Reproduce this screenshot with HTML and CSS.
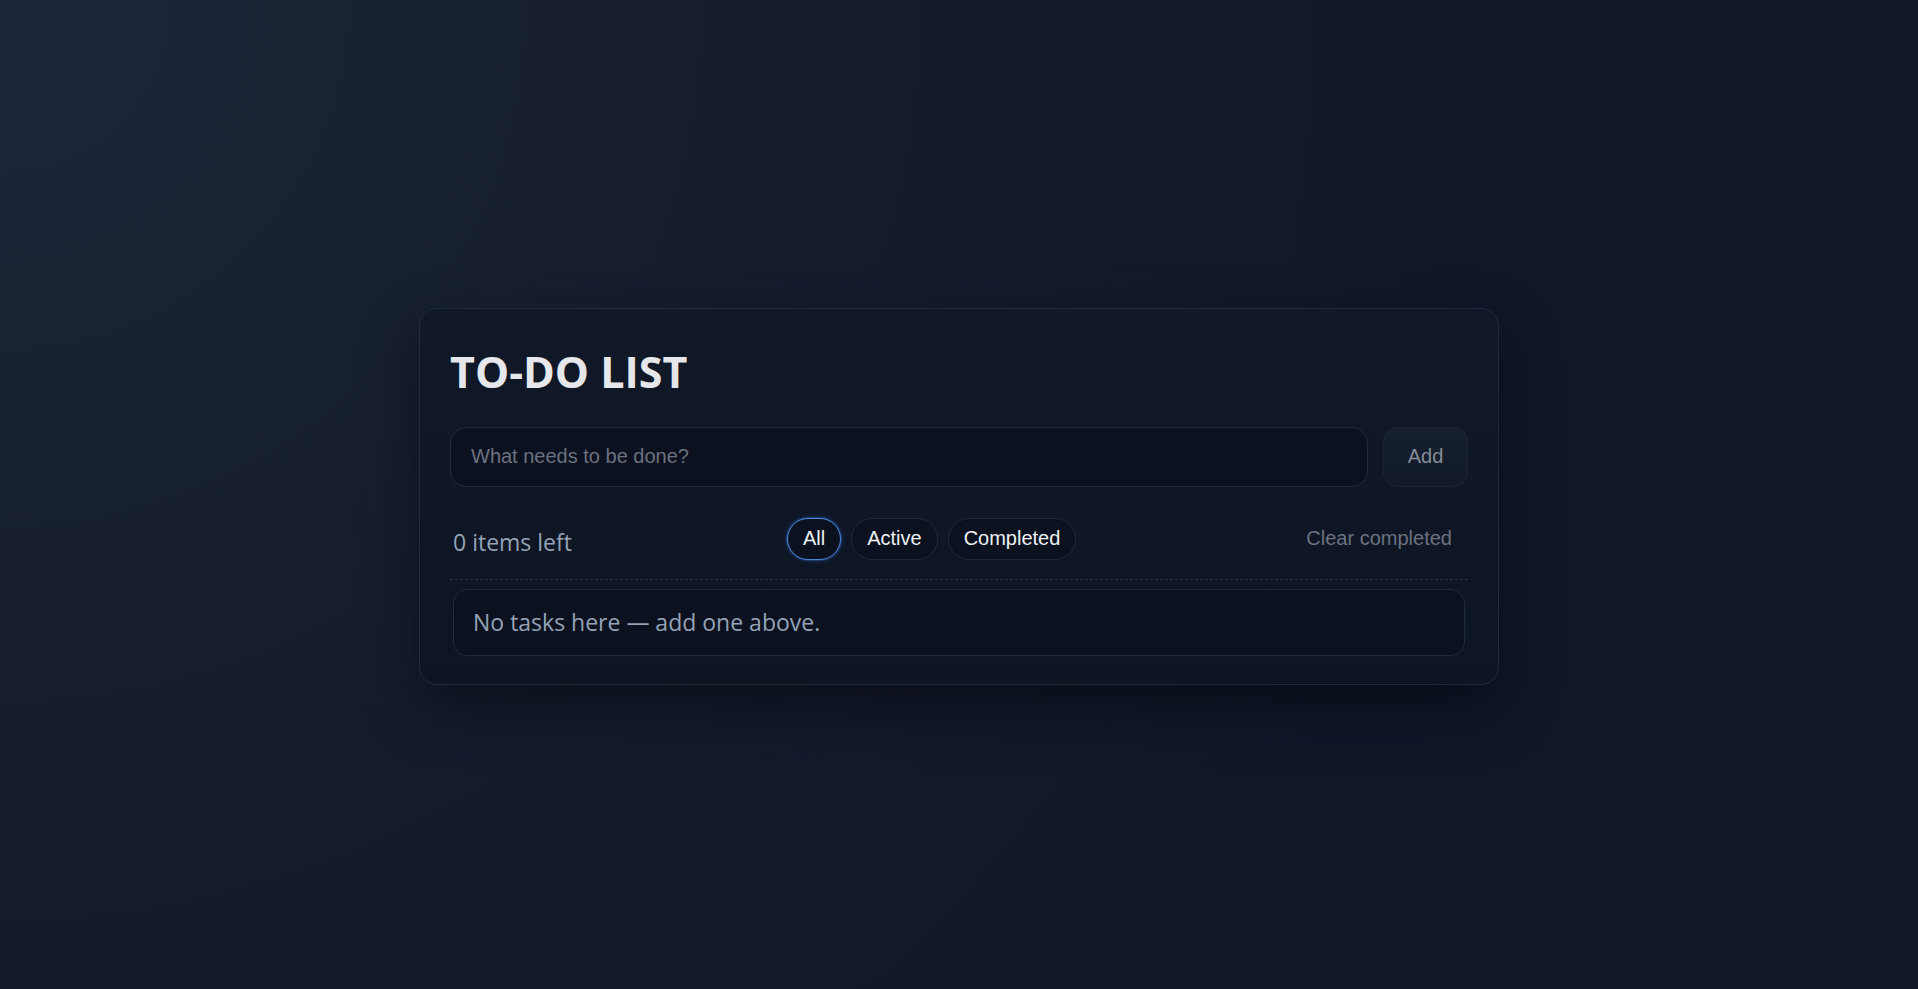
FILE: index.html
```html
<!DOCTYPE html>
<html lang="en">
<head>
<meta charset="utf-8">
<title>To-Do List</title>
<link rel="stylesheet" href="styles.css">
</head>
<body>
<main class="card">
  <h1 class="title">TO-DO LIST</h1>
  <form class="add-row">
    <input class="add-input" type="text" placeholder="What needs to be done?">
    <button class="add-btn" type="button">Add</button>
  </form>
  <div class="controls">
    <span class="count">0 items left</span>
    <div class="filters">
      <button class="pill pill-active" type="button">All</button>
      <button class="pill" type="button">Active</button>
      <button class="pill" type="button">Completed</button>
    </div>
    <button class="clear-btn" type="button">Clear completed</button>
  </div>
  <ul class="list">
    <li class="empty">No tasks here — add one above.</li>
  </ul>
</main>
</body>
</html>
```
FILE: styles.css
```css
* { box-sizing: border-box; }
html, body { height: 100%; }
body {
  margin: 0;
  padding-top: 3px;
  min-height: 100vh;
  display: flex;
  align-items: center;
  justify-content: center;
  background: radial-gradient(circle at 0% 0%, #1d2638 0%, #151d2e 35%, #0f1729 70%, #0f1729 100%);
  font-family: "Liberation Sans", Arial, sans-serif;
  color: #e5e7eb;
}
.card {
  width: 1080px;
  padding: 30px 30px 28px;
  border: 1px solid #1f2a3c;
  border-radius: 18px;
  background: linear-gradient(180deg, #111827 0%, #0d1422 100%);
  box-shadow: 0 24px 60px rgba(0, 0, 0, 0.45);
}
.title {
  margin: 5px 0 0;
  font-family: "Open Sans", "Noto Sans", sans-serif;
  font-weight: 700;
  font-size: 43px;
  line-height: 56px;
  color: #e5e7eb;
}
.add-row {
  display: flex;
  gap: 15px;
  margin: 27px 0 0;
}
.add-input {
  flex: 1;
  height: 60px;
  padding: 0 20px;
  border: 1px solid #1f2b3f;
  border-radius: 16px;
  background: #0b111e;
  color: #e5e7eb;
  font-family: "Liberation Sans", Arial, sans-serif;
  font-size: 20px;
  outline: none;
}
.add-input::placeholder { color: #6b7280; }
.add-btn {
  width: 85px;
  height: 60px;
  border: 1px solid #1c2535;
  border-radius: 14px;
  background: linear-gradient(180deg, #172030 0%, #121a28 100%);
  color: #858c99;
  font-family: "Liberation Sans", Arial, sans-serif;
  font-size: 20px;
}
.controls {
  display: flex;
  align-items: center;
  justify-content: space-between;
  margin-top: 31px;
  padding: 0 1px 19px 3px;
  border-bottom: 1px dashed #253044;
}
.count {
  padding-top: 6px;
  font-family: "Open Sans", "Noto Sans", sans-serif;
  font-size: 23px;
  color: #94a3b8;
}
.filters {
  display: flex;
  gap: 10px;
}
.pill {
  height: 42px;
  padding: 0 15px;
  border: 1px solid #1f2a3d;
  border-radius: 21px;
  background: #0b111e;
  color: #eef0f4;
  font-family: "Liberation Sans", Arial, sans-serif;
  font-size: 20px;
}
.pill-active {
  border-color: #4a86d8;
  box-shadow: 0 0 0 1px rgba(59, 130, 246, 0.25), 0 0 6px rgba(59, 130, 246, 0.3);
}
.clear-btn {
  height: 42px;
  padding: 0 14px;
  border: 1px solid transparent;
  background: transparent;
  color: #6b7280;
  font-family: "Liberation Sans", Arial, sans-serif;
  font-size: 20px;
}
.list {
  list-style: none;
  margin: 9px 0 0;
  padding: 0 3px;
}
.empty {
  padding: 0 19px;
  height: 67px;
  display: flex;
  align-items: center;
  border: 1px solid #1f2b3f;
  border-radius: 14px;
  background: #0b111e;
  font-family: "Open Sans", "Noto Sans", sans-serif;
  font-size: 23px;
  color: #94a3b8;
}
```
